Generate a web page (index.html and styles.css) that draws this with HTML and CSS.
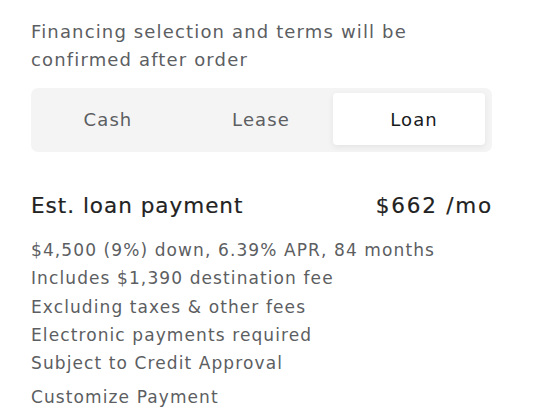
FILE: index.html
```html
<!DOCTYPE html>
<html>
<head>
<meta charset="utf-8">
<link rel="stylesheet" href="styles.css">
</head>
<body>
<div class="page">
  <p class="note">Financing selection and terms will be<br>confirmed after order</p>
  <div class="tabs">
    <div class="tab tab-cash">Cash</div>
    <div class="tab tab-lease">Lease</div>
    <div class="tab tab-loan active">Loan</div>
  </div>
  <div class="summary">
    <span class="title">Est. loan payment</span>
    <span class="price">$662 /mo</span>
  </div>
  <ul class="details">
    <li>$4,500 (9%) down, 6.39% APR, 84 months</li>
    <li>Includes $1,390 destination fee</li>
    <li>Excluding taxes &amp; other fees</li>
    <li>Electronic payments required</li>
    <li>Subject to Credit Approval</li>
  </ul>
  <div class="customize">Customize Payment</div>
</div>
</body>
</html>
```
FILE: styles.css
```css
html, body { margin: 0; padding: 0; background: #fff; }
body { font-family: "DejaVu Sans", "Liberation Sans", sans-serif; color: #5c5e62; }
.page { padding: 18px 60px 0 31px; width: 461px; }
.note { margin: 0; font-size: 18px; line-height: 28px; letter-spacing: 1.15px; white-space: nowrap; }
.tabs {
  margin-top: 14px;
  display: grid;
  grid-template-columns: 149px 149px 152px;
  background: #f4f4f4;
  border-radius: 7px;
  padding: 5px 7px 7px 4px;
  height: 52px;
}
.tab {
  display: flex; align-items: center; justify-content: center;
  font-size: 18px; color: #5c5e62; letter-spacing: 1.1px;
}
.tab-cash { padding-right: 3px; }
.tab-lease { padding-left: 5px; }
.tab-loan { padding-left: 10px; }
.tab.active {
  background: #fff; color: #171a20; border-radius: 4px;
  box-shadow: 0 2px 6px rgba(0,0,0,0.07);
}
.summary {
  margin-top: 40px;
  display: flex; justify-content: space-between; align-items: baseline;
  font-size: 21.5px; color: #222; line-height: 28px; letter-spacing: 1px;
  -webkit-text-stroke: 0.2px #222;
}
.price { letter-spacing: 1.8px; margin-right: -1px; }
.details { list-style: none; margin: 16px 0 0; padding: 0; font-size: 17px; line-height: 28.3px; letter-spacing: 1.1px; white-space: nowrap; }
.customize { margin-top: 6px; font-size: 17px; line-height: 28px; letter-spacing: 1.1px; }
```
